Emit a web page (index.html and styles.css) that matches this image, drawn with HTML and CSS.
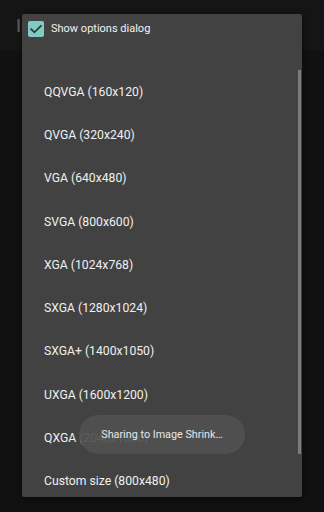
FILE: index.html
```html
<!DOCTYPE html>
<html>
<head>
<meta charset="utf-8">
<link rel="stylesheet" href="styles.css">
</head>
<body>
<div class="screen">
  <div class="appbar"><span class="title">Image Shrink</span></div>
  <div class="content"></div>

  <div class="dialog">
    <div class="header">
      <span class="checkbox">
        <svg width="16" height="16" viewBox="0 0 16 16"><path d="M3.2 8.2 L6.4 11.3 L12.8 4.9" fill="none" stroke="#2f3a39" stroke-width="1.8" stroke-linecap="square"/></svg>
      </span>
      <span class="header-label">Show options dialog</span>
    </div>
    <div class="list">
      <div class="item">QQVGA (160x120)</div>
      <div class="item">QVGA (320x240)</div>
      <div class="item">VGA (640x480)</div>
      <div class="item">SVGA (800x600)</div>
      <div class="item">XGA (1024x768)</div>
      <div class="item">SXGA (1280x1024)</div>
      <div class="item">SXGA+ (1400x1050)</div>
      <div class="item">UXGA (1600x1200)</div>
      <div class="item">QXGA (2048x1536)</div>
      <div class="item">Custom size (800x480)</div>
      <div class="scrollbar"></div>
    </div>
  </div>

  <div class="toast">Sharing to Image Shrink…</div>
</div>
</body>
</html>
```

FILE: styles.css
```css
html, body {
  margin: 0;
  padding: 0;
}
body {
  background: #111111;
  font-family: Roboto, "Liberation Sans", sans-serif;
  width: 324px;
  height: 512px;
  overflow: hidden;
}
.screen {
  position: relative;
  width: 324px;
  height: 512px;
  display: flex;
  flex-direction: column;
}
.appbar {
  height: 50px;
  background: #151515;
  display: flex;
  align-items: center;
  padding-left: 16px;
}
.title {
  color: #5c5c5c;
  font-size: 18px;
  font-weight: 500;
}
.content {
  flex: 1;
  background: #111111;
}
.dialog {
  position: absolute;
  left: 22px;
  top: 14px;
  width: 280px;
  height: 483px;
  background: #424242;
  border-radius: 2px;
  box-shadow: 0 2px 6px rgba(0,0,0,0.5);
  display: flex;
  flex-direction: column;
  overflow: hidden;
}
.header {
  height: 56px;
  flex-shrink: 0;
  display: flex;
  align-items: flex-start;
  padding: 7px 0 0 6px;
  box-sizing: border-box;
  gap: 7px;
}
.checkbox {
  width: 16px;
  height: 16px;
  background: #80cbc4;
  border-radius: 2px;
  display: flex;
}
.header-label {
  color: #f2f2f2;
  font-size: 11px;
  line-height: 16px;
}
.list {
  position: relative;
  flex: 1;
  min-height: 0;
  overflow: hidden;
  display: flex;
  flex-direction: column;
}
.item {
  height: 43.3px;
  display: flex;
  align-items: center;
  padding-left: 22px;
  color: #f0f0f0;
  font-size: 12.2px;
  flex-shrink: 0;
}
.scrollbar {
  position: absolute;
  right: 1px;
  top: 0;
  width: 3px;
  height: 384px;
  background: #7c7c7c;
}
.toast {
  position: absolute;
  left: 79px;
  top: 415px;
  width: 166px;
  height: 39px;
  border-radius: 20px;
  background: rgba(80, 80, 80, 0.92);
  color: #e6e6e6;
  font-size: 10.8px;
  display: flex;
  align-items: center;
  justify-content: center;
}
```
